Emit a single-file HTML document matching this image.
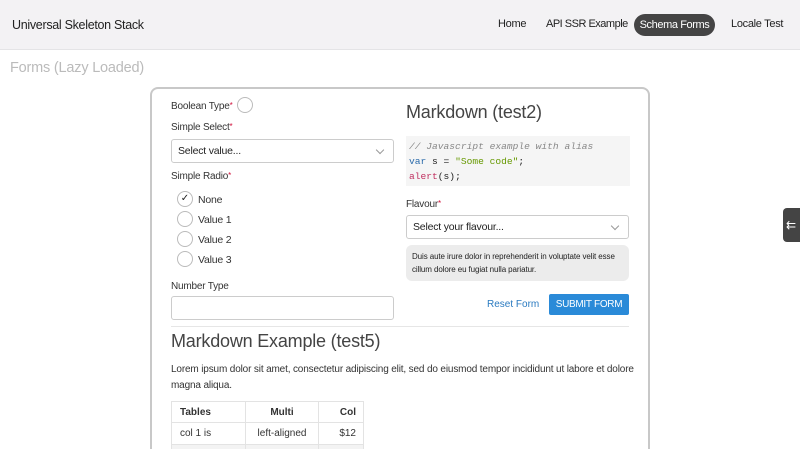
<!DOCTYPE html><html><head><style>
*{box-sizing:border-box;margin:0;padding:0}
html,body{width:800px;height:449px;overflow:hidden}
body{background:#fff;font-family:"Liberation Sans",sans-serif;color:#222;position:relative}
.nav{position:absolute;left:0;top:0;width:800px;height:50px;background:#f3f2f4;border-bottom:1px solid #e4e4e6}
.brand{position:absolute;left:12px;top:18px;font-size:12.5px;color:#222;letter-spacing:-0.3px}
.nav a{position:absolute;top:18px;font-size:11px;color:#222;letter-spacing:-0.3px;white-space:nowrap}
.pill{position:absolute;left:634px;top:14px;width:81px;height:22px;border-radius:11px;background:#444;color:#fff;font-size:11px;letter-spacing:-0.4px;text-align:center;line-height:22px}
.ab{position:absolute}
.title{left:10px;top:60px;font-size:14.5px;color:#bbb;letter-spacing:-0.2px}
.card{left:150px;top:87px;width:500px;height:362px;border:2px solid #c8c8c8;border-bottom:none;border-radius:8px 8px 0 0}
.lbl{font-size:10px;color:#333;letter-spacing:-0.2px;white-space:nowrap}
.req{color:#d0103a;font-size:8px;vertical-align:top}
.input{border:1px solid #ccc;border-radius:3px;background:#fff;font-size:10.5px;padding-left:6px;display:flex;align-items:center;letter-spacing:-0.2px}
.chev{position:absolute;right:10px;top:7px;width:6px;height:6px;border-right:1px solid #999;border-bottom:1px solid #999;transform:rotate(45deg)}
.rad{width:16px;height:16px;border:1px solid #bbb;border-radius:50%}
.code{font-family:"Liberation Mono",monospace}
</style></head><body>
<div class="nav"><div class="brand">Universal Skeleton Stack</div>
<a style="left:498px">Home</a><a style="left:546px;letter-spacing:-0.5px">API SSR Example</a>
<div class="pill">Schema Forms</div><a style="left:731px">Locale Test</a></div>
<div class="ab title">Forms (Lazy Loaded)</div>
<div class="ab card"></div>
<div class="ab lbl" style="left:171px;top:101px">Boolean Type<span class="req">*</span></div>
<div class="ab rad" style="left:237px;top:97px"></div>
<div class="ab lbl" style="left:171px;top:122px">Simple Select<span class="req">*</span></div>
<div class="ab input" style="left:171px;top:139px;width:223px;height:24px">Select value...<div class="chev"></div></div>
<div class="ab lbl" style="left:171px;top:171px">Simple Radio<span class="req">*</span></div>
<div class="ab rad" style="left:177px;top:191px;font-size:10px;text-align:center;line-height:14px">✓</div><div class="ab lbl" style="left:198px;top:194px;font-size:10.5px">None</div>
<div class="ab rad" style="left:177px;top:211px"></div><div class="ab lbl" style="left:198px;top:214px;font-size:10.5px">Value 1</div>
<div class="ab rad" style="left:177px;top:231px"></div><div class="ab lbl" style="left:198px;top:234px;font-size:10.5px">Value 2</div>
<div class="ab rad" style="left:177px;top:251px"></div><div class="ab lbl" style="left:198px;top:254px;font-size:10.5px">Value 3</div>
<div class="ab lbl" style="left:171px;top:281px">Number Type</div>
<div class="ab input" style="left:171px;top:296px;width:223px;height:24px"></div>
<div class="ab" style="left:406px;top:102px;font-size:18px;color:#444;letter-spacing:-0.2px">Markdown (test2)</div>
<div class="ab code" style="left:406px;top:136px;width:224px;height:50px;background:#f5f5f5;font-size:9.6px;line-height:15px;padding:3px 3px">
<div style="color:#888;font-style:italic">// Javascript example with alias</div>
<div><span style="color:#2a6aaa">var</span> s = <span style="color:#690">"Some code"</span>;</div>
<div><span style="color:#c03060">alert</span>(s);</div></div>
<div class="ab lbl" style="left:406px;top:199px">Flavour<span class="req">*</span></div>
<div class="ab input" style="left:406px;top:215px;width:223px;height:24px">Select your flavour...<div class="chev"></div></div>
<div class="ab" style="left:406px;top:245px;width:223px;height:36px;background:#ececec;border-radius:6px;font-size:8px;line-height:13px;padding:5px 6px;color:#222;letter-spacing:-0.1px">Duis aute irure dolor in reprehenderit in voluptate velit esse cillum dolore eu fugiat nulla pariatur.</div>
<div class="ab" style="left:487px;top:299px;font-size:10px;color:#2a7ac0">Reset Form</div>
<div class="ab" style="left:549px;top:294px;width:80px;height:21px;background:#2a8ad8;border-radius:2px;color:#fff;font-size:10px;letter-spacing:-0.3px;text-align:center;line-height:21px">SUBMIT FORM</div>
<div class="ab" style="left:171px;top:326px;width:458px;border-top:1px solid #e6e6e6"></div>
<div class="ab" style="left:171px;top:331px;font-size:18px;color:#444;letter-spacing:-0.2px">Markdown Example (test5)</div>
<div class="ab" style="left:171px;top:362px;width:470px;font-size:10px;line-height:16px;color:#333;letter-spacing:-0.15px">Lorem ipsum dolor sit amet, consectetur adipiscing elit, sed do eiusmod tempor incididunt ut labore et dolore magna aliqua.</div>
<div class="ab" style="left:171px;top:401px;width:200px;height:48px;overflow:hidden">
<table style="border-collapse:collapse;font-size:10px;color:#333">
<tr style="height:21px"><th style="width:74px;text-align:left;padding-left:8px;border:1px solid #e3e3e3">Tables</th><th style="width:73px;border:1px solid #e3e3e3">Multi</th><th style="width:45px;text-align:right;padding-right:7px;border:1px solid #e3e3e3">Col</th></tr>
<tr style="height:22px"><td style="padding-left:8px;border:1px solid #e3e3e3">col 1 is</td><td style="text-align:center;border:1px solid #e3e3e3">left-aligned</td><td style="text-align:right;padding-right:7px;border:1px solid #e3e3e3">$12</td></tr>
<tr style="height:20px;background:#f3f3f3"><td style="border:1px solid #e3e3e3"></td><td style="border:1px solid #e3e3e3"></td><td style="border:1px solid #e3e3e3"></td></tr></table></div>
<div class="ab" style="left:783px;top:208px;width:17px;height:34px;background:#444;border-radius:4px 0 0 4px;color:#fff;font-size:12px;line-height:34px;padding-left:3px">⇇</div>
</body></html>
